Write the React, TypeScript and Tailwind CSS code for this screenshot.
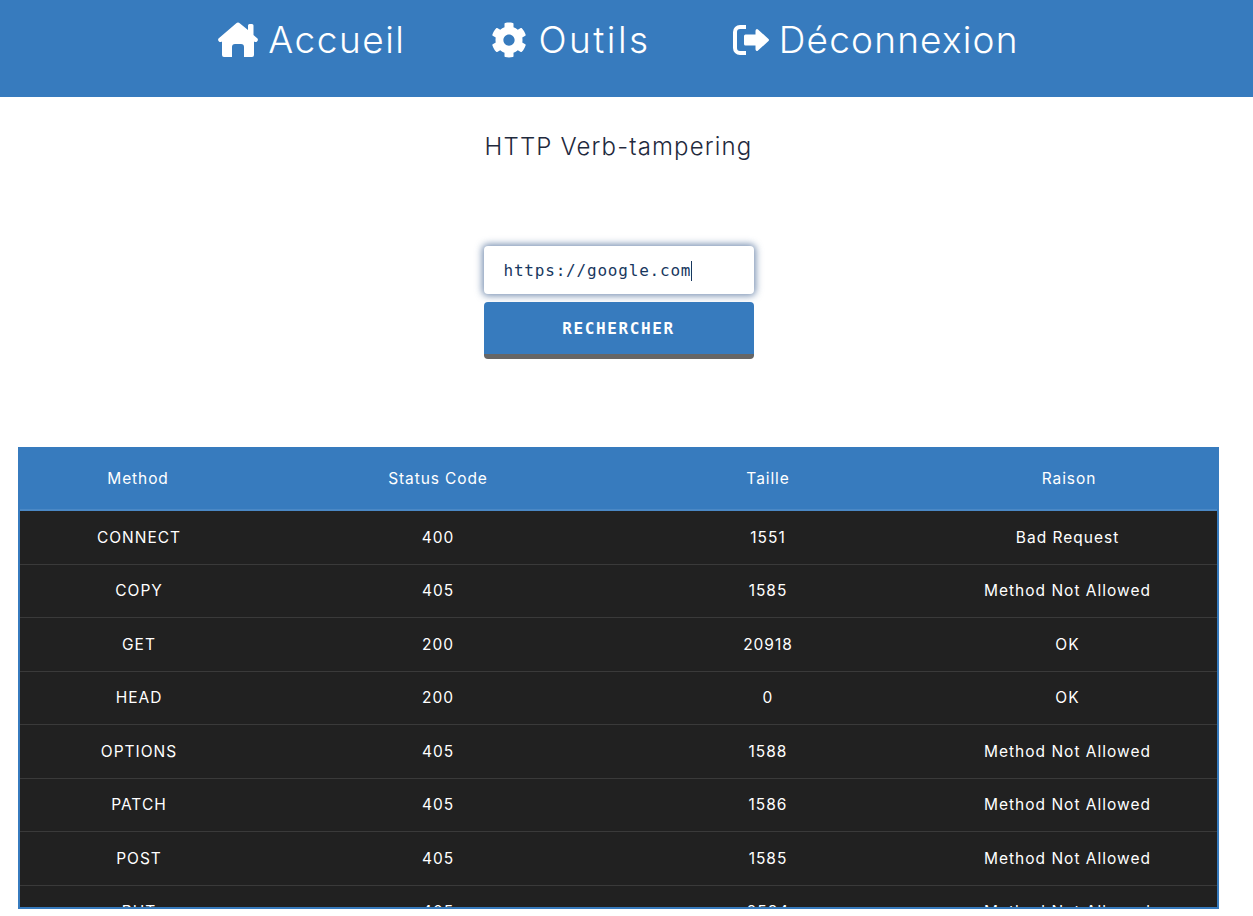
import { FaCog } from "react-icons/fa";

const rows = [
  ["CONNECT", "400", "1551", "Bad Request"],
  ["COPY", "405", "1585", "Method Not Allowed"],
  ["GET", "200", "20918", "OK"],
  ["HEAD", "200", "0", "OK"],
  ["OPTIONS", "405", "1588", "Method Not Allowed"],
  ["PATCH", "405", "1586", "Method Not Allowed"],
  ["POST", "405", "1585", "Method Not Allowed"],
  ["PUT", "405", "2584", "Method Not Allowed"],
];

const cols = "grid grid-cols-[238px_360px_300px_299px]";

function HomeIcon() {
  return (
    <svg viewBox="0 0 40 36" className="w-[40px] h-[36px]" fill="currentColor">
      <path d="M20 .5Q21 .5 22 1.500L30 8V3.500Q30 2 31.500 2H34Q35.500 2 35.500 3.500V13L39.500 16.500Q40.500 18 39 19.500Q38 20.500 36 19.500V33Q36 35 34 35H26V25Q26 22 23 22H17Q14 22 14 25V35H6Q4 35 4 33V19.500Q2 20.500 1 19.500Q-.5 18 .5 16.500L18 1.500Q19 .5 20 .5Z" />
    </svg>
  );
}

function LogoutIcon() {
  return (
    <svg viewBox="0 0 37 30" className="w-[37px] h-[30px]" fill="currentColor">
      <path d="M13 0v4H7a3 3 0 0 0-3 3v16a3 3 0 0 0 3 3h6v4H7a7 7 0 0 1-7-7V7a7 7 0 0 1 7-7Z" />
      <path d="M23 4.500Q24 3.500 25 4.500L35.500 14Q36.500 15 35.500 16L25 25.500Q24 26.500 23 25.500Q22.500 25 22.500 24V20.500H12.500Q11 20.500 11 19V11Q11 9.500 12.500 9.500H22.500V6Q22.500 5 23 4.500Z" />
    </svg>
  );
}

export default function App() {
  return (
    <div className="h-[916px] overflow-hidden bg-white font-['Inter',sans-serif]">
      <header className="h-[97px] bg-[#377bbe] pr-4 text-white">
        <nav className="flex justify-center pt-[18px] text-[37px] leading-[44px] font-light">
          <a className="flex items-center gap-[10px] tracking-[1.5px]"><HomeIcon />Accueil</a>
          <a className="ml-[86px] flex items-center gap-[11px] tracking-[2.5px]"><FaCog className="w-[36px] h-[36px]" />Outils</a>
          <a className="ml-[82px] flex items-center gap-[9px] tracking-[1.2px]"><LogoutIcon />Déconnexion</a>
        </nav>
      </header>

      <main className="w-[1237px]">
        <h1 className="pt-[34px] text-center text-[24px] leading-[32px] font-[350] tracking-[1.15px] text-[#1f2a3d]">HTTP Verb-tampering</h1>

        <form className="mt-[83px] mx-auto w-[270px] flex flex-col gap-2 font-['DejaVu_Sans_Mono',monospace]">
          <div className="h-[48px] rounded bg-white pl-5 pt-[2px] flex items-center text-[16px] tracking-[0.8px] text-[#17375e] shadow-[0_0_7px_2px_rgba(55,90,140,0.65)]">
            https://google.com<span className="w-px h-[20px] bg-[#17375e]" />
          </div>
          <button type="button" className="h-[57px] pt-[2px] rounded bg-[#377bbe] border-b-[5px] border-[#666] text-white text-[16px] font-bold tracking-[1.6px]">RECHERCHER</button>
        </form>

        <div className="mt-[88px] mx-[18px] h-[462px] overflow-hidden border-2 border-[#377bbe] text-white text-[15.5px] font-[370]">
          <div className={`${cols} h-[62.3px] items-center bg-[#377bbe] text-center tracking-[0.9px] pb-[2px] border-b-2 border-[#4a88c5]`}>
            <span className="pr-[2px]">Method</span>
            <span>Status Code</span>
            <span>Taille</span>
            <span className="pl-[3px]">Raison</span>
          </div>
          <div className="bg-[#212121] tracking-[1px]">
            {rows.map((row) => (
              <div key={row[0]} className={`${cols} h-[53.5px] items-center text-center border-b border-[#3a3a3a]`}>
                {row.map((cell, i) => (
                  <span key={i}>{cell}</span>
                ))}
              </div>
            ))}
          </div>
        </div>
      </main>
    </div>
  );
}
